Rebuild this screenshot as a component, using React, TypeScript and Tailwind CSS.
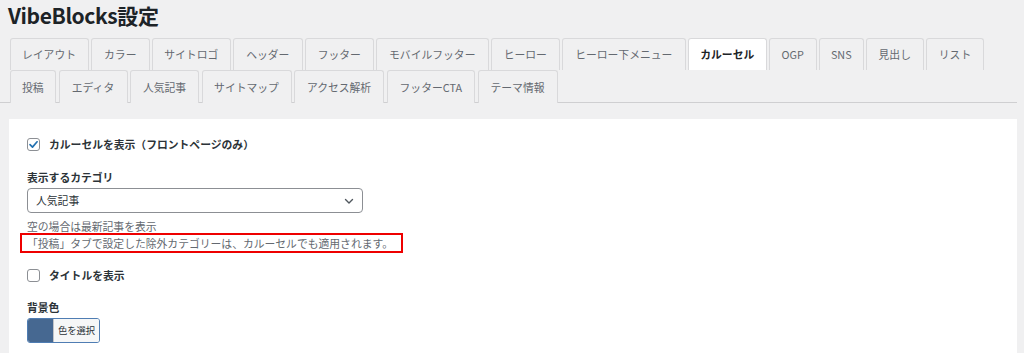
import React from 'react';

type Tab = { label: string; w: string; active?: boolean };

const row1: Tab[] = [
  { label: 'レイアウト', w: 'w-[79px]' },
  { label: 'カラー', w: 'w-[58.5px]' },
  { label: 'サイトロゴ', w: 'w-[78.5px]' },
  { label: 'ヘッダー', w: 'w-[69.5px]' },
  { label: 'フッター', w: 'w-[68.5px]' },
  { label: 'モバイルフッター', w: 'w-[112.5px]' },
  { label: 'ヒーロー', w: 'w-[68.5px]' },
  { label: 'ヒーロー下メニュー', w: 'w-[123.5px]' },
  { label: 'カルーセル', w: 'w-[78.5px]', active: true },
  { label: 'OGP', w: 'w-[47.5px]' },
  { label: 'SNS', w: 'w-[44.5px]' },
  { label: '見出し', w: 'w-[57.5px]' },
  { label: 'リスト', w: 'w-[58px]' },
];

const row2: Tab[] = [
  { label: '投稿', w: 'w-[46.5px]' },
  { label: 'エディタ', w: 'w-[69px]' },
  { label: '人気記事', w: 'w-[69px]' },
  { label: 'サイトマップ', w: 'w-[90px]' },
  { label: 'アクセス解析', w: 'w-[90px]' },
  { label: 'フッターCTA', w: 'w-[88.5px]' },
  { label: 'テーマ情報', w: 'w-[80px]' },
];

function NavTab({ tab }: { tab: Tab }) {
  return (
    <div
      className={`${tab.w} h-full shrink-0 flex items-center justify-center border border-b-0 border-[#d9d9db] rounded-t-[3px] text-[10.8px] ${
        tab.active ? 'bg-white font-bold text-[#1d2327]' : 'bg-[#f0f0f1] text-[#646970]'
      }`}
    >
      {tab.label}
    </div>
  );
}

function Checkbox({ checked }: { checked?: boolean }) {
  return (
    <span className="w-[13px] h-[13px] shrink-0 rounded-[3px] border border-[#8c8f94] bg-white flex items-center justify-center">
      {checked && (
        <svg width="11" height="11" viewBox="0 0 12 12">
          <path d="M2.2 6.2 L4.9 8.9 L9.9 3" fill="none" stroke="#2271b1" strokeWidth="1.8" strokeLinecap="round" strokeLinejoin="round" />
        </svg>
      )}
    </span>
  );
}

export default function App() {
  return (
    <div className="w-[1024px] h-[353px] overflow-hidden bg-[#f0f0f1] font-['Noto_Sans_CJK_JP','Noto_Sans',sans-serif] text-[#1d2327]">
      <h1 className="h-[30px] leading-[30px] pl-[8px] text-[21px] tracking-[-0.4px] font-bold text-[#1d2327]">VibeBlocks設定</h1>

      <div className="mt-[8px] mr-[7px] pl-[9.5px] border-b border-[#cfcfd1]">
        <div className="flex gap-[2.5px] h-[32px]">
          {row1.map((t) => (
            <NavTab key={t.label} tab={t} />
          ))}
        </div>
        <div className="flex gap-[2.5px] h-[33px] -mb-px">
          {row2.map((t) => (
            <NavTab key={t.label} tab={t} />
          ))}
        </div>
      </div>

      <div className="mt-[16px] ml-[9px] mr-[7px] h-[240px] bg-white pl-[18px] pt-[17px] text-[10.8px]">
        <label className="flex items-center gap-[9px] h-[16px]">
          <Checkbox checked />
          <span className="font-bold text-[#2c3338]">カルーセルを表示（フロントページのみ）</span>
        </label>

        <div className="mt-[17px] h-[16px] leading-[16px] font-bold text-[#2c3338]">表示するカテゴリ</div>
        <div className="mt-[3px] w-[336px] h-[25px] border border-[#8c8f94] rounded-[4px] flex items-center justify-between pl-[8px] pr-[8px] text-[#2c3338]">
          <span>人気記事</span>
          <svg width="10" height="10" viewBox="0 0 10 10">
            <path d="M1.5 3.5 L5 7 L8.5 3.5" fill="none" stroke="#50575e" strokeWidth="1.4" strokeLinecap="round" strokeLinejoin="round" />
          </svg>
        </div>

        <div className="mt-[6px] h-[14px] leading-[14px] text-[#646970]">空の場合は最新記事を表示</div>
        <div className="-ml-[7px] w-[383px] h-[20px] border-2 border-[#ee0000] pl-[5px] leading-[16px] text-[#646970]">
          「投稿」タブで設定した除外カテゴリーは、カルーセルでも適用されます。
        </div>

        <label className="mt-[14px] flex items-center gap-[9px] h-[16px]">
          <Checkbox />
          <span className="font-bold text-[#2c3338]">タイトルを表示</span>
        </label>

        <div className="mt-[16px] h-[16px] leading-[16px] font-bold text-[#2c3338]">背景色</div>
        <div className="mt-[3px] w-[73px] h-[25px] flex border border-[#4f7db3] rounded-[3px] overflow-hidden">
          <span className="w-[25px] h-full bg-[#466891]" />
          <span className="flex-1 flex items-center justify-center bg-[#f6f7f7] border-l border-[#c3c4c7] text-[9.3px] text-[#2c3338]">
            色を選択
          </span>
        </div>
      </div>
    </div>
  );
}
